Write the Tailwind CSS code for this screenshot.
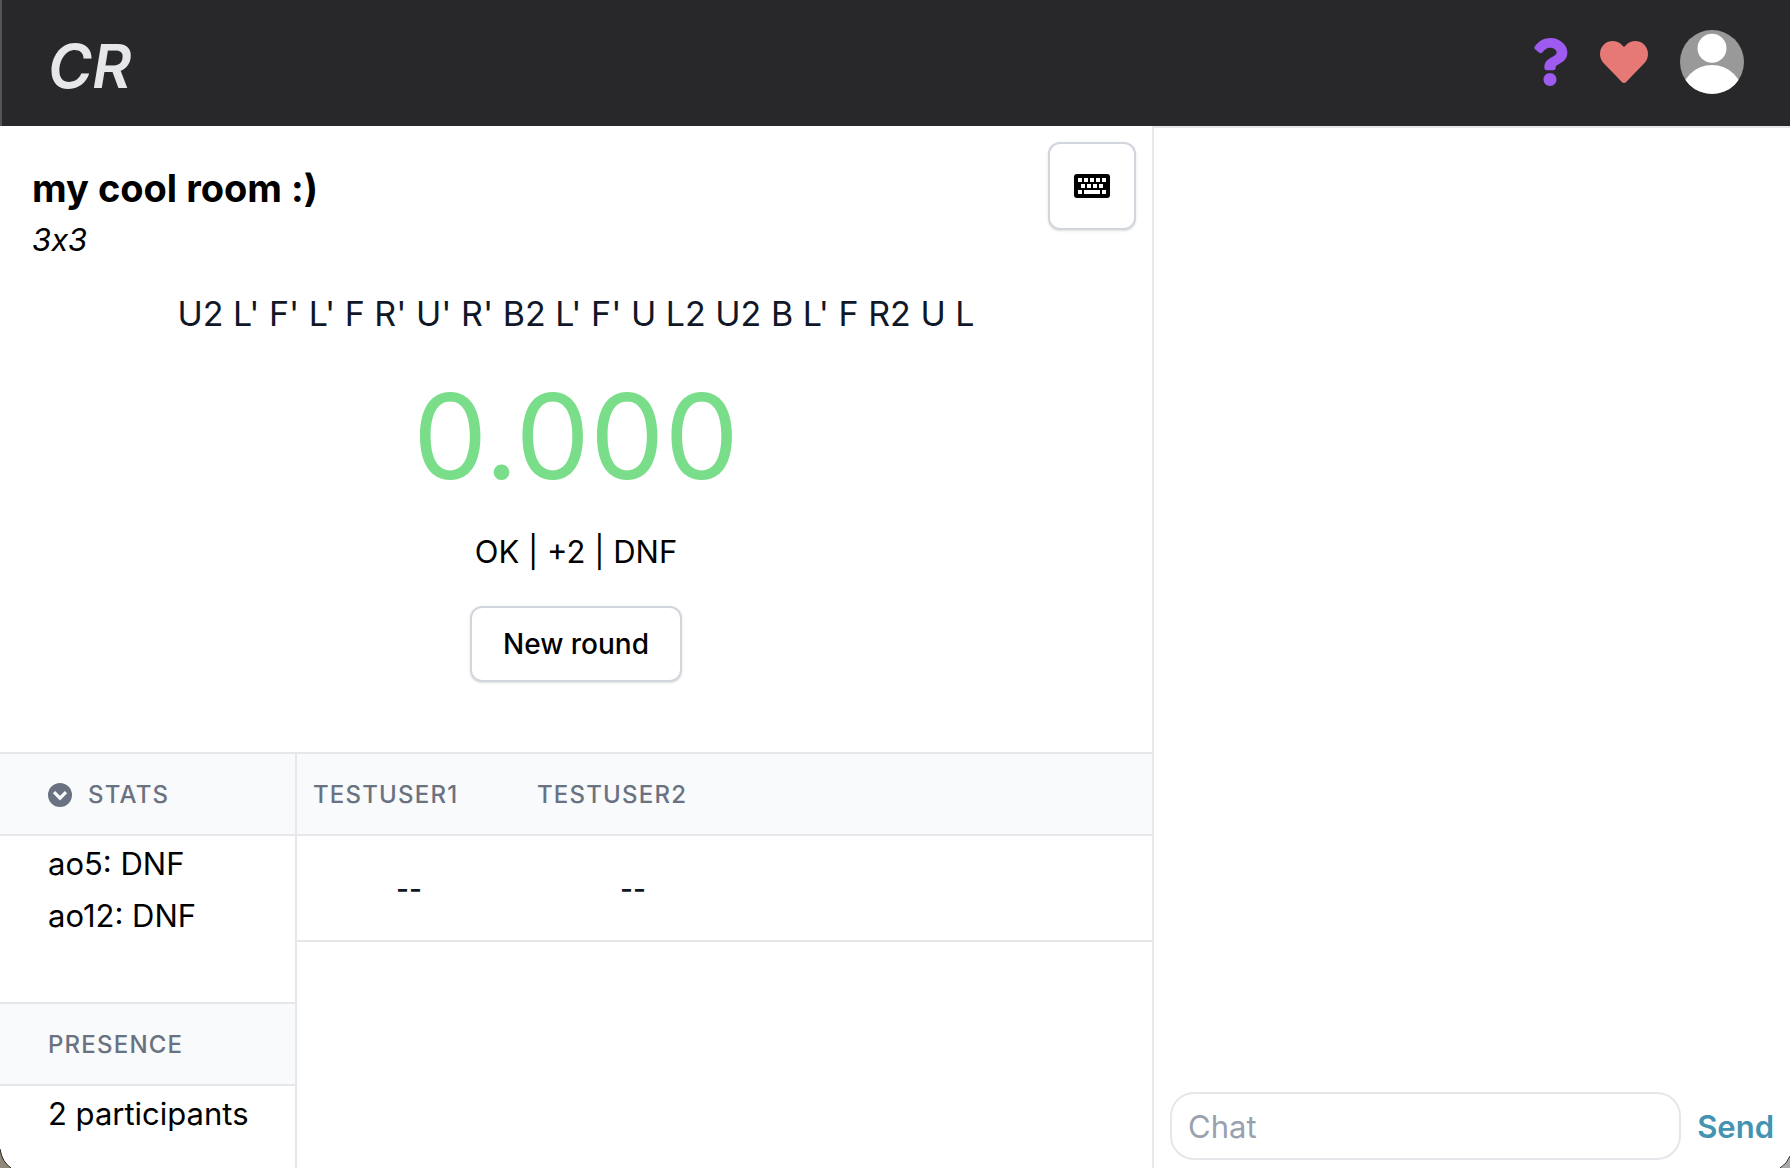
<!DOCTYPE html>
<html lang="en">
<head>
<meta charset="utf-8">
<title>CR</title>
<script src="https://cdn.jsdelivr.net/npm/@tailwindcss/browser@4"></script>
</head>
<body class="relative flex h-screen flex-col overflow-hidden bg-white font-['Inter',sans-serif] text-[31px] leading-[52px] text-black">
  <header class="flex h-[126px] shrink-0 items-center justify-between border-l-2 border-[#555557] bg-[#28282a] pr-[46px] pb-0.5 pl-[46px]">
    <a href="#" class="pt-2 text-[60px] leading-[60px] font-semibold text-gray-200 italic">CR</a>
    <nav class="flex items-center gap-8">
      <a href="#" aria-label="Help">
        <svg class="h-12 w-9" viewBox="0 0 384 512" fill="#9f5bf0"><path d="M202.021 0C122.202 0 70.503 32.703 29.914 91.026c-7.363 10.58-5.093 25.086 5.178 32.874l43.138 32.709c10.373 7.865 25.132 6.026 33.253-4.148 25.049-31.381 43.63-49.449 82.757-49.449 30.764 0 68.816 19.799 68.816 49.631 0 22.552-18.617 34.134-48.993 51.164-35.423 19.86-82.299 44.576-82.299 106.405V320c0 13.255 10.745 24 24 24h72.471c13.255 0 24-10.745 24-24v-5.773c0-42.86 125.268-44.645 125.268-160.627C377.504 66.256 286.902 0 202.021 0zM192 373.459c-38.196 0-69.271 31.075-69.271 69.271 0 38.195 31.075 69.27 69.271 69.27s69.271-31.075 69.271-69.271-31.075-69.27-69.271-69.27z"/></svg>
      </a>
      <a href="#" aria-label="Donate">
        <svg class="size-12" viewBox="0 0 512 512" fill="#e67975"><path d="M462.3 62.6C407.5 15.9 326 24.3 275.7 76.2L256 96.5l-19.7-20.3C186.1 24.3 104.5 15.9 49.7 62.6c-62.8 53.6-66.1 149.8-9.9 207.9l193.5 199.8c12.5 12.9 32.8 12.9 45.3 0l193.5-199.8c56.3-58.1 53-154.3-9.8-207.9z"/></svg>
      </a>
      <button type="button" aria-label="Profile" class="size-16 overflow-hidden rounded-full bg-[#999999]">
        <svg class="size-16" viewBox="0 0 64 64" fill="#fff"><circle cx="32" cy="18.3" r="14.5"/><circle cx="32" cy="66" r="31"/></svg>
      </button>
    </nav>
  </header>

  <div class="flex min-h-0 flex-1">
    <main class="flex min-w-0 flex-1 flex-col">
      <section class="pb-[70px]">
        <div class="flex items-start justify-between pr-4 pl-8">
          <div class="pt-9">
            <h1 class="text-[38px] font-bold">my cool room :)</h1>
            <p class="italic [font-feature-settings:'calt'_0]">3x3</p>
          </div>
          <button type="button" aria-label="Keyboard entry" class="mt-4 flex size-[88px] items-center justify-center rounded-xl border-2 border-gray-300 bg-white shadow-sm">
            <svg class="h-6 w-9" viewBox="0 0 36 24"><rect width="36" height="24" rx="3"/><path fill="#fff" d="M4 4h4v4H4zM10 4h4v4h-4zM16 4h4v4h-4zM22 4h4v4h-4zM28 4h4v4h-4zM7 10h4v4H7zM13 10h4v4h-4zM19 10h4v4h-4zM25 10h4v4h-4zM4 16h4v4H4zM10 16h16v4H10zM28 16h4v4h-4z"/></svg>
          </button>
        </div>
        <div class="flex flex-col items-center pt-[18px]">
          <p class="text-[34px] leading-[60px] text-gray-900">U2 L' F' L' F R' U' R' B2 L' F' U L2 U2 B L' F R2 U L</p>
          <p class="mt-8 text-[118px] leading-[120px] text-[#79dd8a]">0.000</p>
          <p class="mt-[30px]">OK | +2 | DNF</p>
          <button type="button" class="mt-7 h-[76px] rounded-xl border-2 border-gray-300 bg-white px-[31px] text-[28px] font-medium shadow-sm">New round</button>
        </div>
      </section>

      <div class="flex min-h-0 flex-1 border-t-2 border-gray-200">
        <aside class="flex w-[297px] shrink-0 flex-col border-r-2 border-gray-200">
          <section class="h-[248px]">
            <h2 class="flex h-[82px] items-center gap-4 border-b-2 border-gray-200 bg-gray-50 pt-px pl-12 text-2xl font-medium tracking-wider text-gray-500">
              <svg class="size-6" viewBox="0 0 24 24"><circle cx="12" cy="12" r="12" fill="currentColor"/><path d="M6 9.2l6 6 6-6" fill="none" stroke="#f9fafb" stroke-width="3.2"/></svg>
              STATS
            </h2>
            <div class="pt-0.5 pl-12">
              <p>ao5: DNF</p>
              <p>ao12: DNF</p>
            </div>
          </section>
          <section>
            <h2 class="flex h-[84px] items-center border-y-2 border-gray-200 bg-gray-50 pt-0.5 pl-12 text-2xl font-medium tracking-wider text-gray-500">PRESENCE</h2>
            <p class="pt-0.5 pl-12">2 participants</p>
          </section>
        </aside>
        <div class="min-w-0 flex-1">
          <table class="w-full table-fixed border-collapse">
            <colgroup><col class="w-56"><col class="w-56"><col></colgroup>
            <thead>
              <tr class="h-[82px] bg-gray-50 text-left text-2xl tracking-wider text-gray-500 shadow-[inset_0_-2px_0_#e5e7eb]">
                <th scope="col" class="px-4 py-0 font-medium">TESTUSER1</th>
                <th scope="col" class="px-4 py-0 font-medium">TESTUSER2</th>
                <td></td>
              </tr>
            </thead>
            <tbody>
              <tr class="h-[106px] text-center text-[28px] font-medium text-gray-900 shadow-[inset_0_-2px_0_#e5e7eb]">
                <td>--</td>
                <td>--</td>
                <td></td>
              </tr>
            </tbody>
          </table>
        </div>
      </div>
    </main>

    <aside class="flex w-[638px] shrink-0 flex-col border-t-2 border-l-2 border-gray-200">
      <div class="flex-1"></div>
      <form class="flex items-center gap-4 px-4 pb-2">
        <input type="text" aria-label="Chat" placeholder="Chat" class="h-[68px] min-w-0 flex-1 rounded-3xl border-2 border-gray-200 px-4 placeholder:text-gray-400">
        <button type="button" class="pt-0.5 font-semibold text-[#4393b1]">Send</button>
      </form>
    </aside>
  </div>

  <svg class="absolute bottom-0 left-0 h-5 w-3" viewBox="0 0 12 20" aria-hidden="true"><path d="M0 1Q2 14 11 20H0z" fill="#8f8778"/><path d="M0 1Q2 14 11 20" fill="none" stroke="#222"/></svg>
  <svg class="absolute right-0 bottom-0 size-3" viewBox="0 0 12 12" aria-hidden="true"><path d="M12 0Q9 8 2 12H12z" fill="#aaaaaa"/><path d="M12 0Q9 8 2 12" fill="none" stroke="#333"/></svg>
</body>
</html>
